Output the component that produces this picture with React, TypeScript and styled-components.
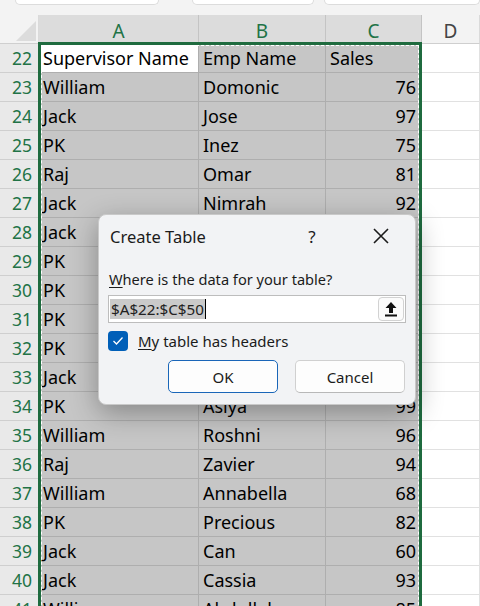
import React from 'react'
import styled, { createGlobalStyle } from 'styled-components'

const GlobalStyle = createGlobalStyle`
  html, body {
    margin: 0;
    padding: 0;
    background: #ffffff;
  }
  body {
    font-family: "Noto Sans", "Open Sans", sans-serif;
  }
`

const Sheet = styled.div`
  position: relative;
  width: 480px;
  height: 606px;
  overflow: hidden;
  background: #ffffff;
`

const TopBar = styled.div`
  display: flex;
  height: 15px;
  background: #f3f3f3;
  padding-left: 15px;
`

const BarBox = styled.div<{ $w: number; $ml?: number }>`
  width: ${(p) => p.$w}px;
  margin-left: ${(p) => p.$ml || 0}px;
  height: 4px;
  background: #ffffff;
  border: 1px solid #dcdcdc;
  border-top: none;
  border-radius: 0 0 6px 6px;
`

const Grid = styled.div`
  display: grid;
  grid-template-columns: 39px 160px 127px 96px 1fr;
  grid-auto-rows: 29px;
  font-size: 18px;
  color: #000;
`

const Corner = styled.div`
  position: relative;
  background: #f3f3f3;
  border-right: 1px solid #dadada;
  border-bottom: 1px solid #cfcfcf;

  &:after {
    content: '';
    position: absolute;
    right: 2px;
    bottom: 2px;
    width: 0;
    height: 0;
    border-left: 20px solid transparent;
    border-bottom: 20px solid #dcdcdc;
  }
`

const ColHeader = styled.div<{ $selected?: boolean }>`
  display: flex;
  align-items: center;
  justify-content: center;
  background: ${(p) => (p.$selected ? '#dcdcdc' : '#f3f3f3')};
  color: ${(p) => (p.$selected ? '#217346' : '#444')};
  border-right: 1px solid ${(p) => (p.$selected ? '#c4c4c4' : '#dadada')};
  border-bottom: 1px solid #cfcfcf;
  font-size: 19px;
  padding-top: 3px;
  box-sizing: border-box;
`

const RowHeader = styled.div`
  display: flex;
  align-items: center;
  justify-content: flex-end;
  padding-right: 7px;
  background: #e9e9e9;
  color: #217346;
  font-size: 17.5px;
  border-bottom: 1px solid #cfcfcf;
  box-sizing: border-box;
`

const Cell = styled.div<{ $active?: boolean; $selected?: boolean; $right?: boolean }>`
  display: flex;
  align-items: center;
  justify-content: ${(p) => (p.$right ? 'flex-end' : 'flex-start')};
  padding: 0 5px 0 4px;
  white-space: nowrap;
  overflow: hidden;
  box-sizing: border-box;
  background: ${(p) => (p.$active ? '#ffffff' : p.$selected ? '#c6c6c6' : '#ffffff')};
  border-right: 1px solid ${(p) => (p.$selected ? '#aeaeae' : '#e1e1e1')};
  border-bottom: 1px solid ${(p) => (p.$selected ? '#aeaeae' : '#e1e1e1')};
`

const Marquee = styled.div`
  position: absolute;
  left: 38px;
  top: 42px;
  width: 378px;
  height: 600px;
  border: 3px solid #1f6b3f;

  &:after {
    content: '';
    position: absolute;
    inset: 0;
    border: 1px dashed #ffffff;
  }
`

const Dialog = styled.div`
  position: absolute;
  left: 98px;
  top: 214px;
  width: 318px;
  height: 191px;
  box-sizing: border-box;
  background: #f2f3f5;
  border: 1px solid #c9c9c9;
  border-radius: 8px;
  box-shadow: 0 8px 28px rgba(0, 0, 0, 0.32);
  color: #1b1b1b;
  display: flex;
  flex-direction: column;
`

const TitleBar = styled.div`
  height: 42px;
  display: flex;
  align-items: center;
  padding-left: 11px;
  font-size: 16.5px;
`

const Title = styled.div`
  flex: 1;
`

const Help = styled.div`
  width: 26px;
  text-align: center;
  font-size: 17px;
  margin-right: 41px;
`

const Close = styled.div`
  width: 30px;
  display: flex;
  justify-content: center;
  margin-right: 19px;
`

const Body = styled.div`
  padding: 12px 9px 0 9px;
  display: flex;
  flex-direction: column;
  font-size: 14.6px;
`

const Prompt = styled.div`
  padding-left: 1px;
  height: 26px;
`

const Key = styled.span`
  text-decoration: underline;
  text-underline-offset: 2px;
`

const RangeInput = styled.div`
  height: 28px;
  box-sizing: border-box;
  background: #ffffff;
  border: 1px solid #bdbdbd;
  display: flex;
  align-items: center;
  padding-left: 1px;
  font-size: 15.2px;
`

const Selected = styled.span`
  background: #cacaca;
  color: #222;
  padding: 0 1px;
  line-height: 20px;
  border-right: 1px solid #000;
`

const Spacer = styled.div`
  flex: 1;
`

const PickButton = styled.div`
  width: 26px;
  height: 24px;
  box-sizing: border-box;
  border: 1px solid #d2d2d2;
  border-radius: 4px;
  background: #fbfbfb;
  display: flex;
  align-items: center;
  justify-content: center;
  margin-right: 1px;
`

const CheckRow = styled.div`
  display: flex;
  align-items: center;
  margin-top: 8px;
  gap: 10px;
  font-size: 15px;
`

const CheckBox = styled.div`
  width: 20px;
  height: 20px;
  border-radius: 4px;
  background: #005fb8;
  display: flex;
  align-items: center;
  justify-content: center;
`

const Buttons = styled.div`
  display: flex;
  justify-content: flex-end;
  gap: 17px;
  margin-top: 9px;
  padding-right: 1px;
`

const Button = styled.div<{ $primary?: boolean }>`
  width: 110px;
  height: 33px;
  box-sizing: border-box;
  background: #fdfdfd;
  border: 1px solid ${(p) => (p.$primary ? '#1a66b8' : '#d0d0d0')};
  border-bottom-color: ${(p) => (p.$primary ? '#1a66b8' : '#b8b8b8')};
  border-radius: 5px;
  display: flex;
  align-items: center;
  justify-content: center;
  font-size: 15px;
  color: #1b1b1b;
`

type Row = [string, string, string]

const rows: Row[] = [
  ['William', 'Domonic', '76'],
  ['Jack', 'Jose', '97'],
  ['PK', 'Inez', '75'],
  ['Raj', 'Omar', '81'],
  ['Jack', 'Nimrah', '92'],
  ['Jack', 'Aarav', '79'],
  ['PK', 'Elena', '86'],
  ['PK', 'Hamza', '77'],
  ['PK', 'Lucas', '91'],
  ['PK', 'Mira', '70'],
  ['Jack', 'Noah', '88'],
  ['PK', 'Asiya', '99'],
  ['William', 'Roshni', '96'],
  ['Raj', 'Zavier', '94'],
  ['William', 'Annabella', '68'],
  ['PK', 'Precious', '82'],
  ['Jack', 'Can', '60'],
  ['Jack', 'Cassia', '93'],
  ['William', 'Abdullah', '85'],
]

const App = () => (
  <Sheet>
    <GlobalStyle />
    <TopBar>
      <BarBox $w={147} />
      <BarBox $w={125} $ml={33} />
      <BarBox $w={160} $ml={10} />
    </TopBar>
    <Grid>
      <Corner />
      <ColHeader $selected>A</ColHeader>
      <ColHeader $selected>B</ColHeader>
      <ColHeader $selected>C</ColHeader>
      <ColHeader>D</ColHeader>

      <RowHeader>22</RowHeader>
      <Cell $active $selected>Supervisor Name</Cell>
      <Cell $selected>Emp Name</Cell>
      <Cell $selected>Sales</Cell>
      <Cell />

      {rows.map((r, i) => (
        <React.Fragment key={i}>
          <RowHeader>{23 + i}</RowHeader>
          <Cell $selected>{r[0]}</Cell>
          <Cell $selected>{r[1]}</Cell>
          <Cell $selected $right>{r[2]}</Cell>
          <Cell />
        </React.Fragment>
      ))}
    </Grid>
    <Marquee />
    <Dialog>
      <TitleBar>
        <Title>Create Table</Title>
        <Help>?</Help>
        <Close>
          <svg width="18" height="18" viewBox="0 0 18 18">
            <path d="M2 2 L16 16 M16 2 L2 16" stroke="#1b1b1b" strokeWidth="1.6" fill="none" />
          </svg>
        </Close>
      </TitleBar>
      <Body>
        <Prompt>
          <Key>W</Key>here is the data for your table?
        </Prompt>
        <RangeInput>
          <Selected>$A$22:$C$50</Selected>
          <Spacer />
          <PickButton>
            <svg width="14" height="16" viewBox="0 0 14 16">
              <path d="M7 1 L12.5 7 H9 V12 H5 V7 H1.5 Z" fill="#111" />
              <rect x="1" y="13.5" width="12" height="2" fill="#111" />
            </svg>
          </PickButton>
        </RangeInput>
        <CheckRow>
          <CheckBox>
            <svg width="12" height="10" viewBox="0 0 12 10">
              <path d="M1.5 5 L4.5 8 L10.5 1.5" stroke="#fff" strokeWidth="1.3" fill="none" />
            </svg>
          </CheckBox>
          <span>
            <Key>M</Key>y table has headers
          </span>
        </CheckRow>
        <Buttons>
          <Button $primary>OK</Button>
          <Button>Cancel</Button>
        </Buttons>
      </Body>
    </Dialog>
  </Sheet>
)

export default App
